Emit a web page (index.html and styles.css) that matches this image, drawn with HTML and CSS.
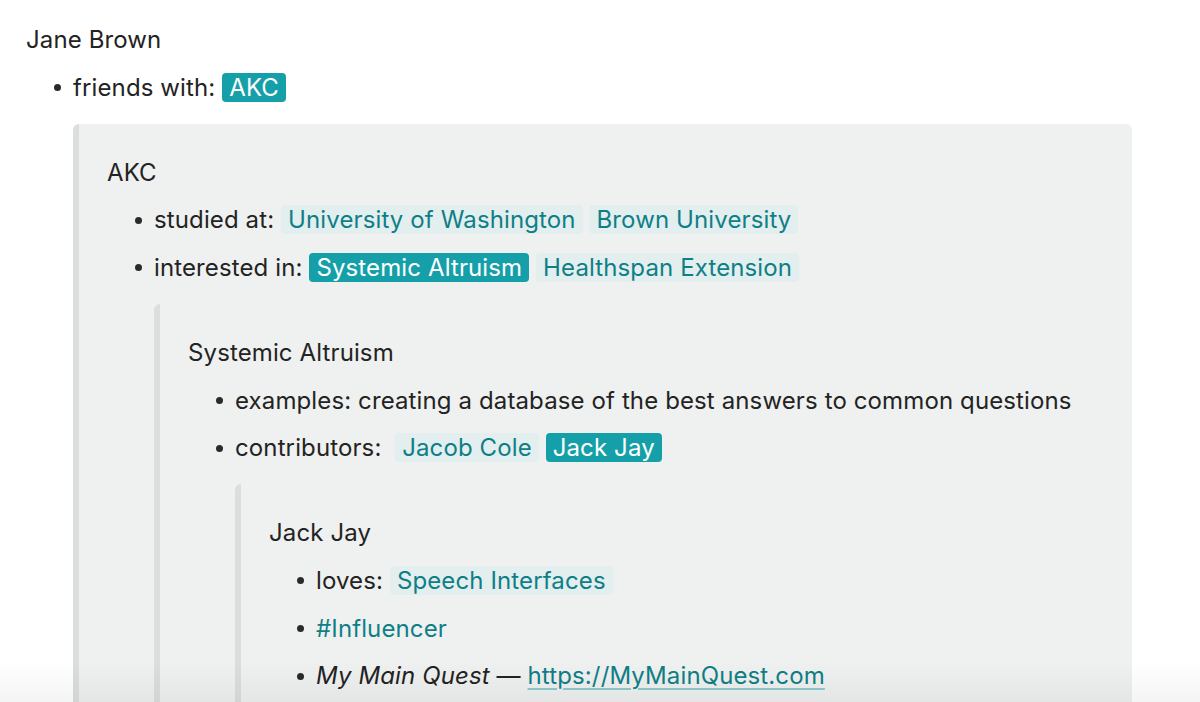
FILE: index.html
```html
<!DOCTYPE html>
<html lang="en">
<head>
<meta charset="utf-8">
<title>Jane Brown</title>
<link rel="stylesheet" href="styles.css">
</head>
<body>
<main class="page">
  <div class="node">
    <div class="title">Jane Brown</div>
    <ul class="props">
      <li class="prop">
        <div class="line">friends with: <span class="chip chip-active">AKC</span></div>
        <div class="card">
          <div class="title">AKC</div>
          <ul class="props">
            <li class="prop">
              <div class="line">studied at: <span class="chip">University of Washington</span> <span class="chip">Brown University</span></div>
            </li>
            <li class="prop">
              <div class="line">interested in: <span class="chip chip-active">Systemic Altruism</span> <span class="chip">Healthspan Extension</span></div>
              <div class="card">
                <div class="title">Systemic Altruism</div>
                <ul class="props">
                  <li class="prop">
                    <div class="line">examples: creating a database of the best answers to common questions</div>
                  </li>
                  <li class="prop">
                    <div class="line">contributors: &nbsp;<span class="chip">Jacob Cole</span> <span class="chip chip-active">Jack Jay</span></div>
                    <div class="card">
                      <div class="title">Jack Jay</div>
                      <ul class="props">
                        <li class="prop">
                          <div class="line">loves: <span class="chip">Speech Interfaces</span></div>
                        </li>
                        <li class="prop">
                          <div class="line"><span class="tag">#Influencer</span></div>
                        </li>
                        <li class="prop">
                          <div class="line"><em>My Main Quest</em> — <a class="link" href="#">https://MyMainQuest.com</a></div>
                        </li>
                        <li class="prop">
                          <div class="line">&nbsp;</div>
                        </li>
                      </ul>
                    </div>
                  </li>
                </ul>
              </div>
            </li>
          </ul>
        </div>
      </li>
    </ul>
  </div>
</main>
<div class="fade"></div>
</body>
</html>
```

FILE: styles.css
```css
html, body {
  margin: 0;
  padding: 0;
  background: #ffffff;
  height: 100%;
  overflow: hidden;
}

body {
  font-family: Inter, "Liberation Sans", sans-serif;
  font-size: 24px;
  letter-spacing: 0.12px;
  color: #232323;
}

.page {
  padding: 16px 68px 0 26px;
}

.title {
  line-height: 29.75px;
  padding: 9px 0;
}

.props {
  list-style: none;
  margin: 0;
  padding: 0 0 0 24px;
}

.prop {
  display: grid;
  grid-template-columns: 23px 1fr;
}

.prop::before {
  content: "";
  grid-column: 1;
  grid-row: 1;
  align-self: center;
  width: 7px;
  height: 7px;
  margin-left: 4px;
  border-radius: 50%;
  background: #2a2a2a;
}

.line {
  grid-column: 2;
  grid-row: 1;
  line-height: 29.75px;
  padding: 9px 0;
  white-space: nowrap;
}

.card {
  grid-column: 2;
  margin-top: 12px;
  padding: 25px 28px 0 28px;
  background: #eff1f0;
  border-left: 6px solid #dcdedd;
  border-radius: 6px;
}

.chip {
  display: inline-block;
  padding: 0 7px;
  line-height: 29px;
  border-radius: 4px;
  background: #e3eeef;
  color: #0f7f87;
}

.chip-active {
  background: #159fa8;
  color: #ffffff;
}

.tag {
  color: #0f7f87;
}

.link {
  color: #0f7f87;
  text-decoration: underline;
  text-decoration-color: #8fcacd;
  text-decoration-thickness: 1.5px;
  text-underline-offset: 4px;
}

.fade {
  position: fixed;
  left: 0;
  right: 0;
  bottom: 0;
  height: 40px;
  background: linear-gradient(to bottom, rgba(0, 0, 0, 0), rgba(0, 0, 0, 0.045));
  pointer-events: none;
}
```
